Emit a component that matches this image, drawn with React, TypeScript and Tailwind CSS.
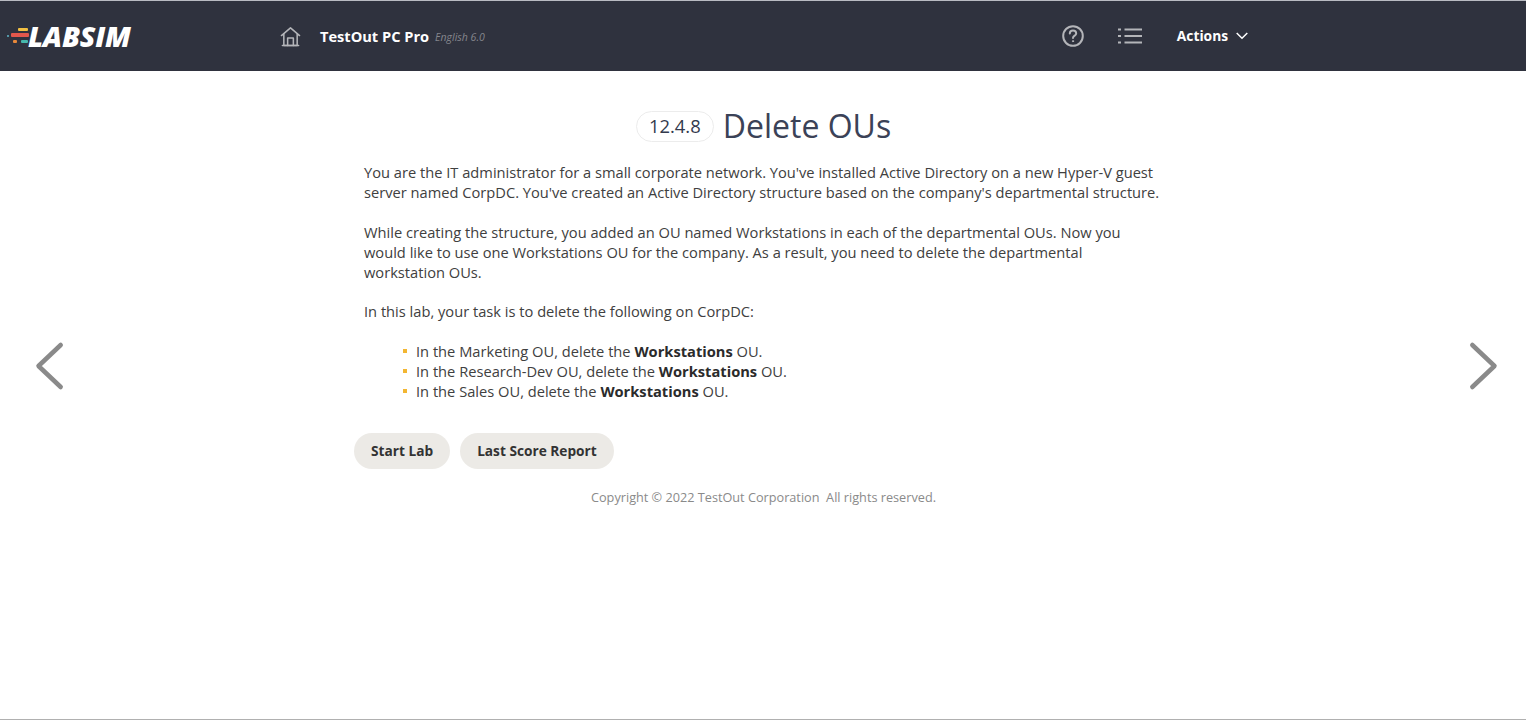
import React from "react";

function Logo() {
  return (
    <div className="flex items-center w-[280px] pl-[6px]">
      <svg width="24" height="16" viewBox="0 0 24 16" className="shrink-0">
        <rect x="1" y="7" width="2" height="2" rx="1" fill="#5fb7c9" />
        <rect x="5" y="5" width="18" height="4" rx="1" fill="#e2574c" />
        <rect x="12" y="0" width="10" height="3" rx="1" fill="#f2c043" />
        <rect x="7" y="12" width="4" height="3" rx="1" fill="#e8883a" />
        <rect x="15" y="12" width="7" height="3" rx="1" fill="#45b8ac" />
      </svg>
      <span className="text-white italic font-extrabold text-[28.5px] leading-none tracking-[-0.2px] -ml-[2px] font-['Open_Sans',sans-serif]">
        LABSIM
      </span>
    </div>
  );
}

function Home() {
  return (
    <svg width="21" height="21" viewBox="0 0 22 22" fill="none" stroke="#b4b5b9" strokeWidth="1.6" strokeLinejoin="round" strokeLinecap="round">
      <path d="M1.5 10 L11 2 L20.5 10" />
      <path d="M4 8.5 V20.5 H18 V8.5" />
      <path d="M8 20.5 V12.5 H14 V20.5" />
      <path d="M2.5 20.5 H19.5" />
    </svg>
  );
}

function Help() {
  return (
    <svg width="22" height="22" viewBox="0 0 22 22" fill="none" stroke="#b4b5b9" strokeWidth="2" strokeLinecap="round">
      <circle cx="11" cy="11" r="9.8" />
      <path d="M7.8 8.6 C7.8 6.7 9.3 5.6 11 5.6 C12.8 5.6 14.2 6.8 14.2 8.4 C14.2 10.6 11 10.6 11 13" />
      <circle cx="11" cy="16.2" r="0.6" fill="#b4b5b9" strokeWidth="1" />
    </svg>
  );
}

function ListIcon() {
  return (
    <svg width="24" height="18" viewBox="0 0 24 18" fill="none" stroke="#b4b5b9" strokeWidth="2">
      <path d="M0 2.5 H3 M0 9 H3 M0 15.5 H3" />
      <path d="M6.5 2.5 H24 M6.5 9 H24 M6.5 15.5 H24" />
    </svg>
  );
}

function Chevron({ dir }: { dir: "left" | "right" }) {
  return (
    <svg width="30" height="50" viewBox="0 0 30 50" fill="none" stroke="#8a8a8a" strokeWidth="4.5" strokeLinecap="round" strokeLinejoin="round">
      <path d={dir === "left" ? "M25.7 4 L3.5 25 L25.7 46" : "M4.3 4 L26.5 25 L4.3 46"} />
    </svg>
  );
}

function Bullet({ children }: { children: React.ReactNode }) {
  return (
    <li className="flex items-center h-5">
      <span className="w-[4px] h-[4px] bg-[#f2b632] mr-[9px] shrink-0" />
      <span>{children}</span>
    </li>
  );
}

export default function App() {
  return (
    <div className="h-[720px] flex flex-col bg-white font-['Open_Sans',sans-serif] overflow-hidden">
      <header className="h-[71px] shrink-0 bg-[#2f323e] border-t border-[#b9bbc2] flex items-center">
        <Logo />
        <Home />
        <span className="ml-[19px] text-white font-bold text-[14.6px] leading-none">TestOut PC Pro</span>
        <span className="ml-[6px] mt-[3px] text-[#85868d] italic text-[10.5px] leading-none">English 6.0</span>
        <div className="ml-[577px]">
          <Help />
        </div>
        <div className="ml-[34px]">
          <ListIcon />
        </div>
        <span className="ml-[35px] text-white font-bold text-[13.8px] leading-none">Actions</span>
        <svg width="12" height="8" viewBox="0 0 12 8" fill="none" stroke="#ffffff" strokeWidth="1.5" className="ml-[8px]">
          <path d="M0.7 1 L6 6.3 L11.3 1" />
        </svg>
      </header>

      <main className="flex-1 flex min-h-0">
        <div className="w-[354px] shrink-0 pl-[35px] pt-[270px]">
          <Chevron dir="left" />
        </div>
        <div className="w-[818px] shrink-0 pt-[39px]">
          <div className="flex items-center justify-center h-[32px] pl-[1px]">
            <span className="h-[31px] w-[78px] justify-center flex items-center rounded-full border border-[#ececec] text-[#333a4d] text-[18.4px]">
              12.4.8
            </span>
            <h1 className="ml-[9px] text-[#3b4257] text-[32px] leading-none">Delete OUs</h1>
          </div>
          <div className="mt-[20px] px-[10px] text-[14.67px] leading-5 text-[#404040]">
            <p className="mr-[-6px]">
              You are the IT administrator for a small corporate network. You've installed Active Directory on a new Hyper-V guest server named CorpDC. You've created an Active Directory structure based on the company's departmental structure.
            </p>
            <p className="mt-5 mr-[20px]">
              While creating the structure, you added an OU named Workstations in each of the departmental OUs. Now you would like to use one Workstations OU for the company. As a result, you need to delete the departmental workstation OUs.
            </p>
            <p className="mt-[19px]">In this lab, your task is to delete the following on CorpDC:</p>
            <ul className="mt-5 pl-[39px]">
              <Bullet>
                In the Marketing OU, delete the <b className="text-[#2b2b2b]">Workstations</b> OU.
              </Bullet>
              <Bullet>
                In the Research-Dev OU, delete the <b className="text-[#2b2b2b]">Workstations</b> OU.
              </Bullet>
              <Bullet>
                In the Sales OU, delete the <b className="text-[#2b2b2b]">Workstations</b> OU.
              </Bullet>
            </ul>
          </div>
          <div className="mt-[32px] flex gap-[10px]">
            <button className="h-[36px] px-[17px] rounded-full bg-[#eceae6] text-[#333333] font-bold text-[13.7px]">Start Lab</button>
            <button className="h-[36px] px-[17px] rounded-full bg-[#eceae6] text-[#333333] font-bold text-[13.7px]">Last Score Report</button>
          </div>
          <p className="mt-[18px] pl-[1px] text-center text-[12.7px] leading-[20px] text-[#8a8a8a] whitespace-pre">Copyright © 2022 TestOut Corporation  All rights reserved.</p>
        </div>
        <div className="flex-1 flex justify-end pr-[28px] pt-[270px]">
          <Chevron dir="right" />
        </div>
      </main>
      <div className="h-px shrink-0 bg-[#b0b0b0]" />
    </div>
  );
}
